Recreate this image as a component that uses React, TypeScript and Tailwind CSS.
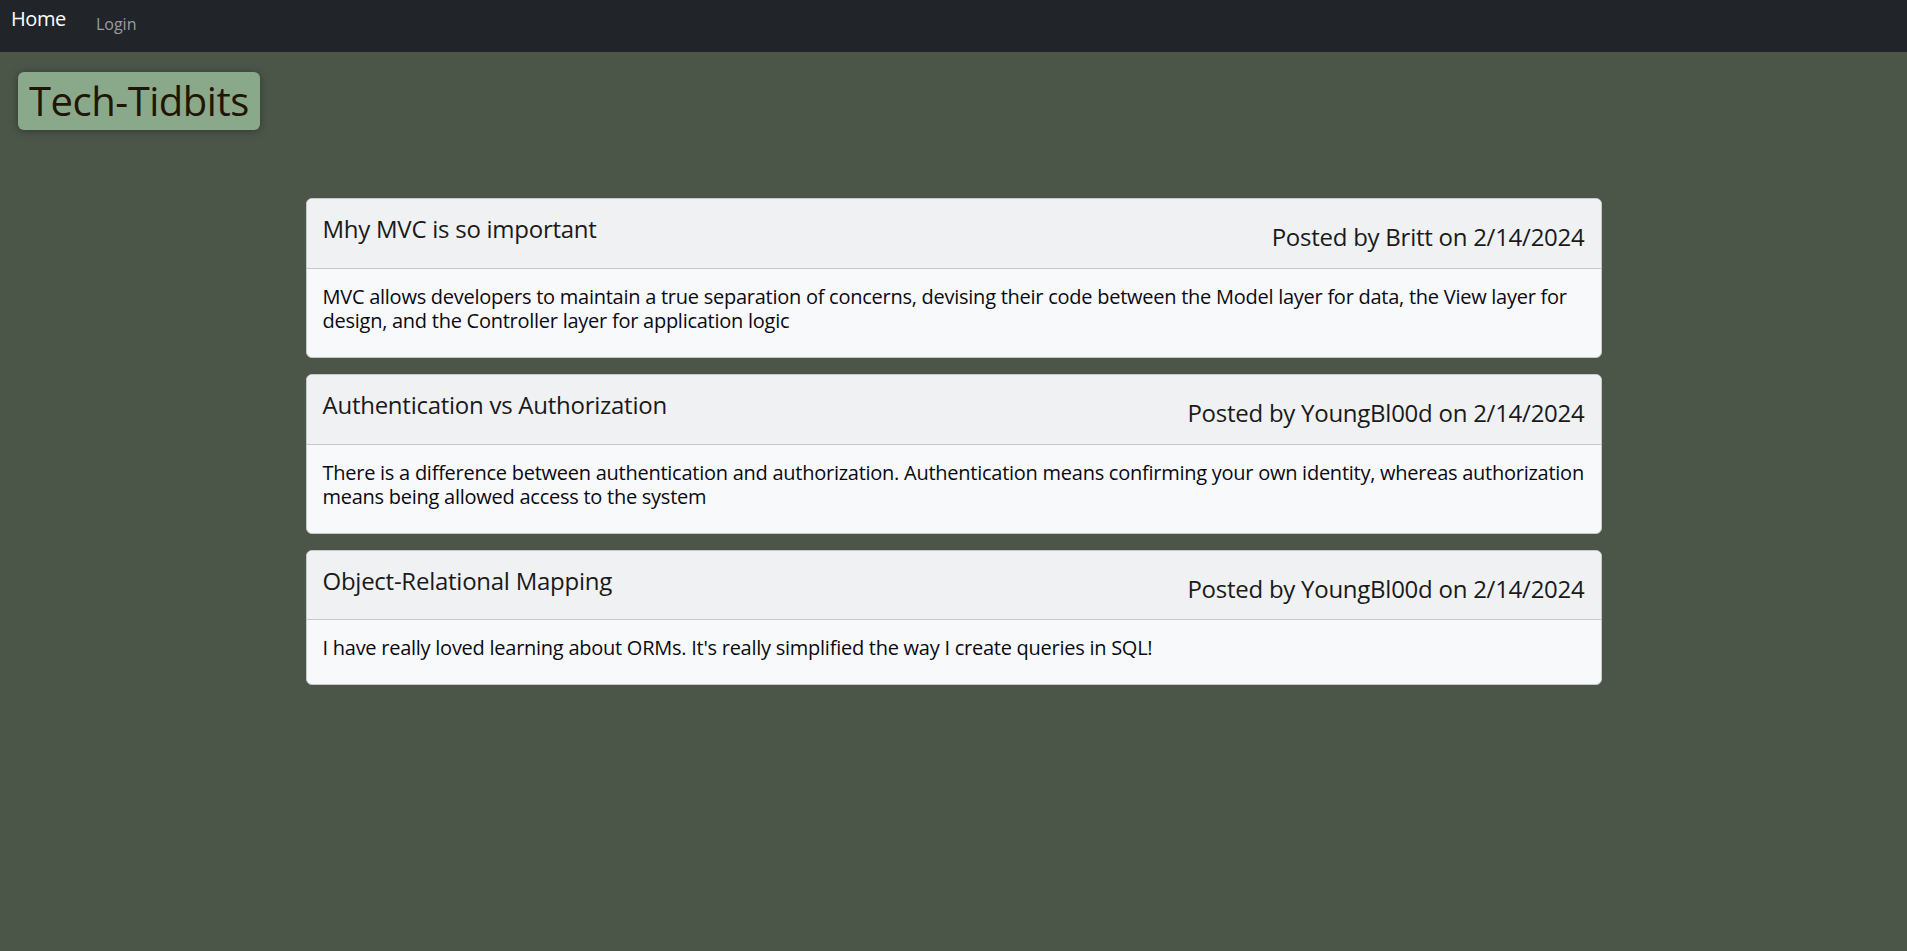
const posts = [
  {
    title: 'Mhy MVC is so important',
    author: 'Britt',
    date: '2/14/2024',
    body: 'MVC allows developers to maintain a true separation of concerns, devising their code between the Model layer for data, the View layer for design, and the Controller layer for application logic',
  },
  {
    title: 'Authentication vs Authorization',
    author: 'YoungBl00d',
    date: '2/14/2024',
    body: 'There is a difference between authentication and authorization. Authentication means confirming your own identity, whereas authorization means being allowed access to the system',
  },
  {
    title: 'Object-Relational Mapping',
    author: 'YoungBl00d',
    date: '2/14/2024',
    body: "I have really loved learning about ORMs. It's really simplified the way I create queries in SQL!",
  },
];

export default function App() {
  return (
    <div className="min-h-screen bg-[#4b5649] font-['Open_Sans',sans-serif] text-[#1a1a1a]">
      <nav className="h-[52px] bg-[#212529] flex items-start pl-[11px]">
        <a href="#" className="pt-[4px] text-[20px] leading-[30px] text-white tracking-[-0.02em]">
          Home
        </a>
        <a href="#" className="ml-[30px] pt-[12px] text-[16px] leading-[24px] text-[#9b9c9e]">
          Login
        </a>
      </nav>

      <header className="pl-[18px] pt-[20px]">
        <h1 className="inline-block rounded-md bg-[#8aa98a] px-[11px] py-[5px] text-[40px] leading-[48px] tracking-[-0.012em] text-[#1f1606] shadow-[0_1px_8px_rgba(0,0,0,0.35)]">
          Tech-Tidbits
        </h1>
      </header>

      <main className="mx-auto mt-[68px] w-[1296px] flex flex-col gap-4 tracking-[-0.016em]">
        {posts.map((post) => (
          <div key={post.title} className="rounded-md border border-[#c6c8ca] bg-[#f8f9fa] overflow-hidden">
            <div className="flex items-end justify-between border-b border-[#c6c8ca] bg-[#f0f1f3] px-4 py-4">
              <h4 className="mb-2 text-[24px] leading-[28.8px]">{post.title}</h4>
              <h4 className="text-[24px] leading-[28.8px]">
                Posted by {post.author} on {post.date}
              </h4>
            </div>
            <div className="p-4">
              <h5 className="mb-2 text-[20px] leading-[24px] text-[#0a0a14]">{post.body}</h5>
            </div>
          </div>
        ))}
      </main>
    </div>
  );
}
